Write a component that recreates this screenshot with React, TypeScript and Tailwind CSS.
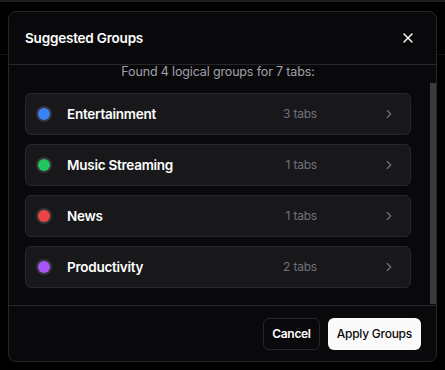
import React, { useLayoutEffect, useRef } from "react";
import { ChevronRight, X } from "lucide-react";

type Group = { name: string; count: number; dot: string };

const groups: Group[] = [
  { name: "Entertainment", count: 3, dot: "bg-[#3b82f6]" },
  { name: "Music Streaming", count: 1, dot: "bg-[#22c55e]" },
  { name: "News", count: 1, dot: "bg-[#ef4444]" },
  { name: "Productivity", count: 2, dot: "bg-[#a855f7]" },
];

const GroupRow = ({ group }: { group: Group }) => (
  <div className="flex h-[42px] items-center rounded-md border border-[#27272a] bg-[#18181b] pl-3 pr-3.5">
    <span className={`h-3 w-3 shrink-0 rounded-full ring-2 ring-[#34343a] ${group.dot}`} />
    <span className="ml-[17px] flex-1 text-[13.5px] font-semibold tracking-[-0.25px] text-white">
      {group.name}
    </span>
    <span className="mr-[65px] text-[12px] tracking-[-0.2px] text-[#71717a]">{group.count} tabs</span>
    <ChevronRight size={14} strokeWidth={2} className="text-[#71717a]" />
  </div>
);

const App = () => {
  const listRef = useRef<HTMLDivElement>(null);

  // list is shown scrolled a little down
  useLayoutEffect(() => {
    if (listRef.current) listRef.current.scrollTop = 19;
  }, []);

  return (
    <div className="relative h-[370px] w-[445px] overflow-hidden bg-black font-['Inter',sans-serif]">
      {/* page behind the overlay */}
      <div className="h-[2px] bg-[#1e1e20]" />
      <div className="h-[53px] border-b border-[#161618]" />

      {/* dialog */}
      <div className="absolute left-2 top-[11px] flex h-[351px] w-[429px] flex-col rounded-lg border border-[#27272a] bg-[#09090b]">
        <div className="flex h-[53px] shrink-0 items-center justify-between border-b border-[#27272a] pl-4 pr-4">
          <h2 className="text-[13.5px] font-semibold tracking-[-0.2px] text-white">Suggested Groups</h2>
          <button className="flex h-6 w-6 items-center justify-center text-white">
            <X size={16} strokeWidth={2} />
          </button>
        </div>

        <div className="flex min-h-0 flex-1">
          <div ref={listRef} className="min-w-0 flex-1 overflow-hidden pb-[19px] pl-4 pr-[19px] pt-4">
            <p className="mb-[11px] text-center text-[12.5px] leading-5 tracking-[-0.15px] text-[#a1a1aa]">
              Found 4 logical groups for 7 tabs:
            </p>
            <div className="flex flex-col gap-[9px]">
              {groups.map((g) => (
                <GroupRow key={g.name} group={g} />
              ))}
            </div>
          </div>
          {/* scrollbar */}
          <div className="w-[6px] shrink-0">
            <div className="mt-[18px] h-[221px] bg-[#3a3a40]" />
          </div>
        </div>

        <div className="flex h-[56px] shrink-0 items-center justify-end gap-2 border-t border-[#27272a] pr-[15px]">
          <button className="h-8 rounded-md border border-[#27272a] bg-[#09090b] px-2 text-[12px] font-semibold tracking-[-0.3px] text-white">
            Cancel
          </button>
          <button className="h-8 rounded-md bg-[#fafafa] px-[9px] text-[12px] font-medium tracking-[-0.25px] text-[#09090b]">
            Apply Groups
          </button>
        </div>
      </div>
    </div>
  );
};

export default App;
